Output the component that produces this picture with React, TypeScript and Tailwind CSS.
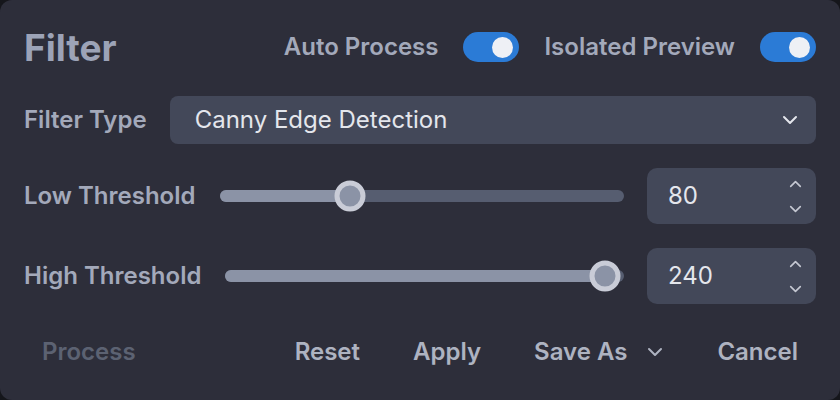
import { useState } from 'react';

const font = { fontFamily: 'Inter, "Noto Sans", sans-serif' };

function Toggle({ on }: { on: boolean }) {
  return (
    <div
      className={`flex h-[30px] w-[56px] items-center rounded-full px-[4px] ${
        on ? 'justify-end bg-[#2b7bd6]' : 'justify-start bg-[#4a5063]'
      }`}
    >
      <span className="mr-[2px] h-[21px] w-[21px] rounded-full bg-[#eef0f5]" />
    </div>
  );
}

function Chevron({ up = false, className = '' }: { up?: boolean; className?: string }) {
  return (
    <svg viewBox="0 0 16 10" className={className} fill="none" stroke="currentColor" strokeWidth="2" strokeLinecap="round" strokeLinejoin="round">
      <path d={up ? 'M2 8l6-6 6 6' : 'M2 2l6 6 6-6'} />
    </svg>
  );
}

interface SliderRowProps {
  label: string;
  value: number;
  pos: number;
}

function SliderRow({ label, value, pos }: SliderRowProps) {
  return (
    <div className="flex items-center">
      <span className="shrink-0 text-[24px] font-semibold text-[#a3a9ba]">{label}</span>
      <div className="relative ml-[24px] h-[12px] flex-1 rounded-full bg-[#565d70]">
        <div className="h-full rounded-full bg-[#8b93a6]" style={{ width: `${pos}%` }} />
        <div
          className="absolute top-1/2 h-[31px] w-[31px] -translate-x-1/2 -translate-y-1/2 rounded-full border-[5px] border-[#c9ccd7] bg-[#8b93a6]"
          style={{ left: `${pos}%` }}
        />
      </div>
      <div className="ml-[23px] flex h-[56px] w-[169px] shrink-0 items-center justify-between rounded-[10px] bg-[#434859] pl-[21px] pr-[14px]">
        <span className="text-[24px] text-[#e4e6ec]">{value}</span>
        <div className="flex flex-col gap-[17px] text-[#c5c8d2]">
          <Chevron up className="h-[8px] w-[13px]" />
          <Chevron className="h-[8px] w-[13px]" />
        </div>
      </div>
    </div>
  );
}

export default function App() {
  const [autoProcess] = useState(true);
  const [isolated] = useState(true);

  return (
    <div className="h-[400px] w-[840px] bg-[#15161b]" style={font}>
      <div className="flex h-full flex-col rounded-[12px] bg-[#2d2e3a] px-[24px] pt-[24px]">
        {/* Header */}
        <div className="flex h-[46px] items-center justify-between">
          <h1 className="text-[37px] font-bold leading-none text-[#9ca3b7]">Filter</h1>
          <div className="flex items-center">
            <span className="mr-[25px] text-[24px] font-semibold text-[#a3a9ba]">Auto Process</span>
            <Toggle on={autoProcess} />
            <span className="ml-[25px] mr-[25px] text-[24px] font-semibold text-[#a3a9ba]">Isolated Preview</span>
            <Toggle on={isolated} />
          </div>
        </div>

        {/* Filter type */}
        <div className="mt-[26px] flex items-center">
          <span className="text-[24px] font-semibold text-[#a3a9ba]">Filter Type</span>
          <div className="ml-[23px] flex h-[48px] flex-1 items-center justify-between rounded-[8px] bg-[#434859] pl-[25px] pr-[18px]">
            <span className="text-[24px] text-[#e4e6ec]">Canny Edge Detection</span>
            <Chevron className="h-[10px] w-[16px] text-[#e4e6ec]" />
          </div>
        </div>

        {/* Sliders */}
        <div className="mt-[24px] flex flex-col gap-[24px]">
          <SliderRow label="Low Threshold" value={80} pos={32.2} />
          <SliderRow label="High Threshold" value={240} pos={95.3} />
        </div>

        {/* Footer */}
        <div className="mt-[24px] flex items-center justify-between text-[24px] font-semibold">
          <button className="px-[18px] py-[6px] text-[#5c6272]">Process</button>
          <div className="flex items-center gap-[17px] text-[#aeb3c1]">
            <button className="px-[18px] py-[6px]">Reset</button>
            <button className="px-[18px] py-[6px]">Apply</button>
            <button className="flex items-center gap-[19px] px-[18px] py-[6px]">
              Save As
              <Chevron className="h-[10px] w-[18px]" />
            </button>
            <button className="px-[18px] py-[6px]">Cancel</button>
          </div>
        </div>
      </div>
    </div>
  );
}
